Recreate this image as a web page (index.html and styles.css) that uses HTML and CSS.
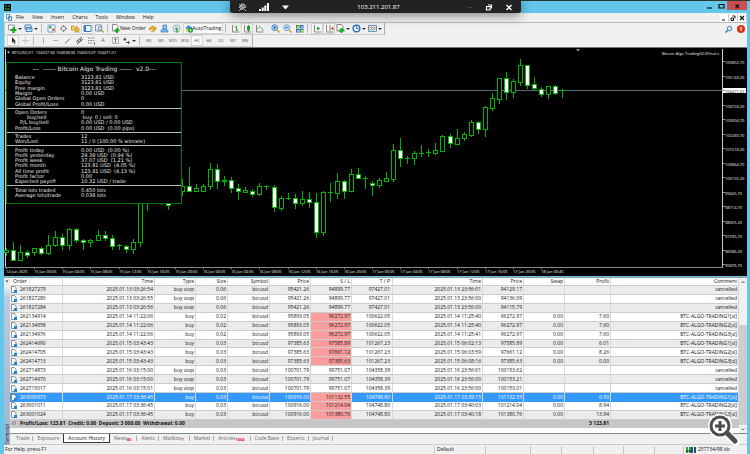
FILE: index.html
```html
<!DOCTYPE html>
<html lang="en">
<head>
  <meta charset="UTF-8">
  <meta name="viewport" content="width=device-width, initial-scale=1.0">
  <title>BTCUSD,H1 - Terminal</title>
  <link rel="stylesheet" href="styles.css">
</head>
<body>
  <div class="remote-bar">
    <button class="remote-btn" aria-label="Pin"><svg width="9" height="9" viewBox="0 0 9 9"><path d="M3 1h3l2 3-3 1-1 2-3-3 2-1zM1 8l2-2M1 1l7 7" fill="#777" stroke="#ddd" stroke-width=".7"/></svg></button>
    <button class="remote-btn" aria-label="Signal"><svg width="10" height="9" viewBox="0 0 10 9"><path d="M0 6h2v2H0zM2.700 4.500h2V8h-2zM5.300 2.500h2V8h-2zM8 0h2v8H8z" fill="#fff"/></svg></button>
    <button class="remote-btn" aria-label="More"><svg width="9" height="9" viewBox="0 0 9 9"><path d="M1 2.500h7L4.500 6.500z" fill="#fff"/></svg></button>
    <span class="remote-host">103.211.201.87</span>
    <button class="remote-btn" aria-label="Minimize"><svg width="6" height="9" viewBox="0 0 6 9"><path d="M1 4.500h4" stroke="#444"/></svg></button>
    <button class="remote-btn" aria-label="Restore"><svg width="8" height="9" viewBox="0 0 8 9"><path d="M1.500 3.500h3.500v3.500H1.500zM3 2h3.500v3.500" fill="none" stroke="#fff" stroke-width="1.200"/></svg></button>
    <button class="remote-btn" aria-label="Close"><svg width="8" height="9" viewBox="0 0 8 9"><path d="M1.500 2l5 5M6.500 2l-5 5" stroke="#fff" stroke-width="1.300"/></svg></button>
  </div>

  <div class="app">
    <header class="title-bar">
      <svg class="app-icon" width="7" height="7" viewBox="0 0 7 7"><path d="M0 0h7v7H0z" fill="#0a0a0a"/><path d="M1 2h2M4 2h2M1 5h5" stroke="#39b54a"/></svg>
      <div class="window-controls">
        <button aria-label="Minimize"><svg width="8" height="8" viewBox="0 0 8 8"><path d="M2 6h5" stroke="#111" stroke-width="1.200"/></svg></button>
        <button aria-label="Maximize"><svg width="8" height="8" viewBox="0 0 8 8"><path d="M2 2.500h5v3.500H2z" fill="none" stroke="#111" stroke-width="1.200"/></svg></button>
        <button class="close" aria-label="Close"><svg width="8" height="8" viewBox="0 0 8 8"><path d="M2.500 2.500l3.500 3.500M6 2.500L2.500 6" stroke="#111" stroke-width="1.300"/></svg></button>
      </div>
    </header>

    <nav class="menu-bar">
      <svg width="6" height="7" viewBox="0 0 6 7"><path d="M.5.5h3v4h-3zM2.500 2.500h3v4h-3z" fill="#fff" stroke="#4b83c4"/></svg>
      <button>File</button>
      <button>View</button>
      <button>Insert</button>
      <button>Charts</button>
      <button>Tools</button>
      <button>Window</button>
      <button>Help</button>
      <div class="mdi-controls">
        <button aria-label="Minimize chart"><svg width="8" height="8" viewBox="0 0 8 8"><path d="M2 6h3" stroke="#111"/></svg></button>
        <button aria-label="Restore chart"><svg width="8" height="8" viewBox="0 0 8 8"><path d="M2 4h2.500v2.500H2zM3.500 2h2.500v2.500" fill="none" stroke="#111"/></svg></button>
        <button aria-label="Close chart"><svg width="8" height="8" viewBox="0 0 8 8"><path d="M2 2l4 4M6 2L2 6" stroke="#111" stroke-width="1.200"/></svg></button>
      </div>
    </nav>

    <div class="toolbar">
      <div class="tool-group">
        <button class="tool wide" aria-label="New chart"><svg width="9" height="9" viewBox="0 0 9 9"><path d="M.5 1h6v5h-6z" fill="#fff" stroke="#8a9aa8"/><path d="M5.500 3v6M2.500 6h6" stroke="#17a81f" stroke-width="2.200"/></svg><i class="caret"></i></button>
        <button class="tool wide" aria-label="Profiles"><svg width="9" height="9" viewBox="0 0 9 9"><path d="M1 1h6v4H1zM2 3.500h6v4H2z" fill="#dceafa" stroke="#4b83c4"/></svg><i class="caret"></i></button>
        <i class="sep"></i>
        <button class="tool" aria-label="Market watch"><svg width="9" height="9" viewBox="0 0 9 9"><path d="M1 1h7v7H1z" fill="#fff" stroke="#6ea6d8"/><path d="M2 2h2.500v2.500H2z" fill="#3fae49"/><path d="M5 4.500h2.500V7H5z" fill="#e2643c"/></svg></button>
        <button class="tool" aria-label="Data window"><svg width="9" height="9" viewBox="0 0 9 9"><circle cx="4.500" cy="4.500" r="2.300" fill="none" stroke="#888"/><path d="M4.500 1v2M4.500 6v2M1 4.500h2M6 4.500h2" stroke="#888"/></svg></button>
        <button class="tool" aria-label="Navigator"><svg width="9" height="9" viewBox="0 0 9 9"><path d="M.5 2h2l1 1h3v3h-6z" fill="#f8d768" stroke="#b58a1c" stroke-width=".8"/><path d="M6 3.500l1 1.500h1.500l-1 1.500.5 2-2-1-2 1 .3-2L3.500 5H5z" fill="#f5bd28" stroke="#a87510" stroke-width=".5"/></svg></button>
        <button class="tool active" aria-label="Terminal"><svg width="9" height="9" viewBox="0 0 9 9"><path d="M1 1.500h7v6H1z" fill="#fff" stroke="#3b78c0"/><path d="M1 1.500h2v6H1z" fill="#3b78c0"/></svg></button>
        <button class="tool" aria-label="Strategy tester"><svg width="9" height="9" viewBox="0 0 9 9"><path d="M.5 1h6v6h-6z" fill="#eef4fa" stroke="#7c93a8"/><circle cx="5" cy="4.500" r="2" fill="#cfe4f7" stroke="#4c7da8" stroke-width=".8"/><path d="M6.500 6L8.500 8.500" stroke="#c79a2a" stroke-width="1.300"/></svg></button>
        <i class="sep"></i>
        <button class="tool text"><svg width="8" height="9" viewBox="0 0 8 9"><path d="M.5.500h4l1.500 2V7H.5z" fill="#fff" stroke="#888"/><path d="M5 4v5M2.500 6.500h5" stroke="#17a81f" stroke-width="1.800"/></svg>New Order</button>
        <button class="tool" aria-label="MetaEditor"><svg width="9" height="9" viewBox="0 0 9 9"><path d="M1 5l3.500-3 4 2.500L5 8z" fill="#e8b530" stroke="#a87510" stroke-width=".8"/><path d="M2 5.500l3 2" stroke="#fff" stroke-width=".7"/></svg></button>
        <button class="tool" aria-label="Market"><svg width="9" height="9" viewBox="0 0 9 9"><path d="M1 8c0-3 2-3 3.500-3S8 5 8 8z" fill="#7fb6ea" stroke="#3f7fbe" stroke-width=".7"/><path d="M3 1h3.500v4H3z" fill="#9cc8f0" stroke="#3f7fbe" stroke-width=".8"/></svg></button>
        <button class="tool" aria-label="Signals"><svg width="9" height="9" viewBox="0 0 9 9"><circle cx="4.500" cy="4.500" r="3.500" fill="none" stroke="#8db8a5"/><circle cx="4.500" cy="4.500" r="1.500" fill="#5fa7cf"/><path d="M5 5v3.500" stroke="#2fa838" stroke-width="1.500"/></svg></button>
        <button class="tool text active"><svg width="8" height="9" viewBox="0 0 8 9"><path d="M0 4l3.500-3L8 4l-4 2z" fill="#4a94d4"/><path d="M1 5h5v2.500H1z" fill="#e8c040"/><circle cx="5.500" cy="6.300" r="2.500" fill="#1ea52b"/><path d="M4.800 5l2 1.300-2 1.300z" fill="#fff"/></svg>AutoTrading</button>
        <i class="sep"></i>
        <button class="tool" aria-label="Bar chart"><svg width="9" height="9" viewBox="0 0 9 9"><path d="M1.500 1v7h7" fill="none" stroke="#888"/><path d="M5.500 2v5M4 3h1.500M5.500 6H7" stroke="#2fa838"/></svg></button>
        <button class="tool active" aria-label="Candlesticks"><svg width="9" height="9" viewBox="0 0 9 9"><path d="M1.500 1v7h7" fill="none" stroke="#888"/><path d="M4 2h3v4.500H4z" fill="#1ea52b"/><path d="M5.500 1v7" stroke="#1ea52b"/></svg></button>
        <button class="tool" aria-label="Line chart"><svg width="9" height="9" viewBox="0 0 9 9"><path d="M1.500 1v7h7" fill="none" stroke="#888"/><path d="M2 5.500l2.500-3 2 1.500 2 3" fill="none" stroke="#5fb868"/></svg></button>
        <button class="tool spaced" aria-label="Zoom in"><svg width="9" height="9" viewBox="0 0 9 9"><circle cx="3.700" cy="3.700" r="2.900" fill="#cfe6fa" stroke="#3b82c8"/><path d="M2 3.700h3.400M3.700 2v3.400" stroke="#2a68ae"/><path d="M6 6l2.500 2.500" stroke="#d2a52c" stroke-width="1.600"/></svg></button>
        <button class="tool" aria-label="Zoom out"><svg width="9" height="9" viewBox="0 0 9 9"><circle cx="3.700" cy="3.700" r="2.900" fill="#cfe6fa" stroke="#6fa0cf"/><path d="M2 3.700h3.400" stroke="#2a68ae"/><path d="M6 6l2.500 2.500" stroke="#d2a52c" stroke-width="1.600"/></svg></button>
        <button class="tool" aria-label="Tile windows"><svg width="9" height="9" viewBox="0 0 9 9"><path d="M1 1h3.500v3.500H1zM5 5h3.500v3.500H5z" fill="#35a03a"/><path d="M5 1h3.500v3.500H5zM1 5h3.500v3.500H1z" fill="#3566c8"/><path d="M2 3h2M6 3h2M2 7h2M6 7h2" stroke="#fff"/></svg></button>
        <i class="sep"></i>
        <button class="tool active" aria-label="Auto scroll"><svg width="9" height="9" viewBox="0 0 9 9"><path d="M1.500 1v7h7" fill="none" stroke="#888"/><path d="M4 2.500l3.500 2L4 6.500z" fill="#2fa838"/></svg></button>
        <button class="tool active" aria-label="Chart shift"><svg width="9" height="9" viewBox="0 0 9 9"><path d="M1.500 1v7h7M5 1v6" fill="none" stroke="#888"/><path d="M8.500 2.500v4L5.500 4.500z" fill="#c8553c"/></svg></button>
        <button class="tool wide" aria-label="Indicators"><svg width="9" height="9" viewBox="0 0 9 9"><path d="M1 .5h4.500l1.500 2V7H1z" fill="#fff" stroke="#888"/><path d="M5.500 4v5M3 6.500h5.500" stroke="#17a81f" stroke-width="1.900"/></svg><i class="caret"></i></button>
        <button class="tool wide" aria-label="Periods"><svg width="9" height="9" viewBox="0 0 9 9"><circle cx="4.500" cy="4.500" r="3.300" fill="#fff" stroke="#2c72c4" stroke-width="1.500"/><path d="M4.500 2.500v2h2" fill="none" stroke="#333" stroke-width=".8"/></svg><i class="caret"></i></button>
        <button class="tool wide" aria-label="Templates"><svg width="9" height="9" viewBox="0 0 9 9"><path d="M.5 1.500h8v6h-8z" fill="#e3f0fb" stroke="#6f93b5"/><path d="M1.500 4l2-1 2 1 2-1" fill="none" stroke="#c8553c" stroke-width=".8"/><path d="M1.500 6l2-1 2 1 2-1" fill="none" stroke="#2fa838" stroke-width=".8"/></svg><i class="caret"></i></button>
      </div>
      <div class="toolbar-right">
        <button class="tool" aria-label="Search"><svg width="8" height="9" viewBox="0 0 8 9"><circle cx="4.500" cy="3.500" r="2.200" fill="#eaf2fc" stroke="#3a6fc9"/><path d="M3 5L.5 7.500" stroke="#3a6fc9" stroke-width="1.400"/></svg></button>
        <button class="alert-badge" aria-label="1 notification">1</button>
      </div>
    </div>

    <div class="toolbar">
      <div class="tool-group">
        <button class="tool active" aria-label="Cursor"><svg width="9" height="9" viewBox="0 0 9 9"><path d="M3 1v6l1.500-1.200L5.500 8l1-.5-1-2H7z" fill="#333"/></svg></button>
        <button class="tool" aria-label="Crosshair"><svg width="9" height="9" viewBox="0 0 9 9"><path d="M4.500 1v7M1 4.500h7" stroke="#bbb" stroke-width=".8"/></svg></button>
        <i class="sep"></i>
        <button class="tool" aria-label="Vertical line"><svg width="9" height="9" viewBox="0 0 9 9"><path d="M4.500 1.500v6" stroke="#aaa"/></svg></button>
        <button class="tool" aria-label="Horizontal line"><svg width="9" height="9" viewBox="0 0 9 9"><path d="M2 4.500h5" stroke="#aaa"/></svg></button>
        <button class="tool" aria-label="Trendline"><svg width="9" height="9" viewBox="0 0 9 9"><path d="M2 7.500l5-5" stroke="#666"/></svg></button>
        <button class="tool" aria-label="Channel"><svg width="9" height="9" viewBox="0 0 9 9"><path d="M1 6l6-5M2 8l6-5M3 4l1 3M5 2.500l1 3" stroke="#555" stroke-width=".9"/></svg></button>
        <button class="tool" aria-label="Fibonacci"><svg width="9" height="9" viewBox="0 0 9 9"><path d="M1 2h7M1 4.500h7M1 7h5" stroke="#777" stroke-dasharray="1 .7"/><path d="M7.500 6v3" stroke="#777"/></svg></button>
        <button class="tool" aria-label="Text">A</button>
        <button class="tool" aria-label="Text label"><svg width="9" height="9" viewBox="0 0 9 9"><path d="M1.500 1.500h6v6h-6z" fill="none" stroke="#999" stroke-width=".7"/><path d="M3 3h3M4.500 3v4" stroke="#666" stroke-width=".8"/></svg></button>
        <button class="tool wide" aria-label="Arrows"><svg width="9" height="9" viewBox="0 0 9 9"><path d="M1 3.500L3 1.500l1.500 2L3 5zM4 6h2V4.500L8 6.500 6 8.500V7H4z" fill="#555"/></svg><i class="caret"></i></button>
        <i class="sep"></i>
        <button class="tool period">M1</button>
        <button class="tool period">M5</button>
        <button class="tool period">M15</button>
        <button class="tool period">M30</button>
        <button class="tool period active">H1</button>
        <button class="tool period">H4</button>
        <button class="tool period">D1</button>
        <button class="tool period">W1</button>
        <button class="tool period">MN</button>
      </div>
    </div>

    <main class="chart">
      <svg id="chart" class="chart-canvas" viewBox="4 48 743 228" role="img" aria-label="BTCUSD hourly chart"></svg>
      <section class="stats">
        <h2>---&nbsp; ------ Bitcoin Algo Trading ------&nbsp; v2.0---</h2>
        <dl class="rows-6">
          <dt>Balance</dt><dd>3123.81 USD</dd>
          <dt>Equity</dt><dd>3123.81 USD</dd>
          <dt>Free margin</dt><dd>3123.81 USD</dd>
          <dt>Margin</dt><dd>0.00 USD</dd>
          <dt>Global Open Orders</dt><dd>0</dd>
          <dt>Global Profit/Loss</dt><dd>0.00 USD</dd>
        </dl>
        <dl class="rows-4">
          <dt>Open Orders</dt><dd>0</dd>
          <dt class="indent-2">buy/sell</dt><dd>&nbsp;buy: 0 / sell: 0</dd>
          <dt class="indent-1">P/L buy/sell</dt><dd>0.00 USD / 0.00 USD</dd>
          <dt>Profit/Loss</dt><dd>0.00 USD&nbsp; (0.00 pips)</dd>
        </dl>
        <dl class="rows-2">
          <dt>Trades</dt><dd>12</dd>
          <dt>Won/Lost</dt><dd>11 / 0 (100.00 % winrate)</dd>
        </dl>
        <dl class="rows-7">
          <dt>Profit today</dt><dd>0.00 USD&nbsp; (0.00 %)</dd>
          <dt>Profit yesterday</dt><dd>29.38 USD&nbsp; (0.94 %)</dd>
          <dt>Profit week</dt><dd>37.07 USD&nbsp; (1.21 %)</dd>
          <dt>Profit month</dt><dd>123.81 USD&nbsp; (4.05 %)</dd>
          <dt>All time profit</dt><dd>123.81 USD&nbsp; (4.13 %)</dd>
          <dt>Profit factor</dt><dd>0.00</dd>
          <dt>Expected payoff</dt><dd>10.32 USD / trade</dd>
        </dl>
        <dl class="rows-2">
          <dt>Total lots traded</dt><dd>0.450 lots</dd>
          <dt>Average lots/trade</dt><dd>0.038 lots</dd>
        </dl>
      </section>
    </main>

    <section class="terminal">
      <div class="terminal-side">
        <button class="side-close" aria-label="Close terminal">×</button>
        <span class="side-label">Terminal</span>
      </div>
      <div class="terminal-main">
        <div class="history">
          <table>
            <colgroup>
              <col class="w-order"><col class="w-time"><col class="w-type"><col class="w-size"><col class="w-symbol"><col class="w-price"><col class="w-price"><col class="w-price"><col class="w-close"><col class="w-price"><col class="w-price"><col class="w-profit"><col>
            </colgroup>
            <thead>
              <tr><th>Order&nbsp; <span class="sort">⁄</span></th><th>Time</th><th>Type</th><th>Size</th><th>Symbol</th><th>Price</th><th>S / L</th><th>T / P</th><th>Time</th><th>Price</th><th>Swap</th><th>Profit</th><th>Comment</th></tr>
            </thead>
            <tbody id="orders"></tbody>
            <tfoot>
              <tr><td colspan="11"><svg width="6" height="6" viewBox="0 0 6 6"><circle cx="3" cy="3" r="1.500" fill="none" stroke="#777" stroke-width=".7"/></svg>Profit/Loss: 123.81&nbsp; Credit: 0.00&nbsp; Deposit: 3 000.00&nbsp; Withdrawal: 0.00</td><td class="total">3 123.81</td><td></td></tr>
            </tfoot>
          </table>
          <div class="scrollbar">
            <svg width="8" height="8" viewBox="0 0 8 8"><path d="M2.500 5L4 3.500 5.500 5" fill="none" stroke="#555"/></svg>
            <div class="scroll-track"><div class="scroll-thumb"></div></div>
            <svg width="8" height="8" viewBox="0 0 8 8"><path d="M2.500 3.500L4 5l1.500-1.500" fill="none" stroke="#777"/></svg>
          </div>
        </div>
        <div class="tabs">
          <button>Trade</button>
          <button>Exposure</button>
          <button class="selected">Account History</button>
          <button>News<sub>85</sub></button>
          <button>Alerts</button>
          <button>Mailbox<sub>7</sub></button>
          <button>Market</button>
          <button>Articles<sub>1004</sub></button>
          <button>Code Base</button>
          <button>Experts</button>
          <button>Journal</button>
        </div>
      </div>
    </section>

    <footer class="status-bar">
      <span>For Help, press F1</span>
      <span>Default</span>
      <span></span>
      <span></span>
      <span></span>
      <span></span>
      <span></span>
      <span></span>
      <span class="traffic"><svg width="10" height="6" viewBox="0 0 10 6"><path d="M0 0h2v6H0zM3 0h2v6H3z" fill="#2fa838"/><path d="M5 0h2v6H5zM8 0h2v6H8z" fill="#1d4f7c"/><path d="M0 4h5" stroke="#123" stroke-width="1"/></svg>257734/98 kb</span>
    </footer>
  </div>

  <button class="magnifier" aria-label="Enlarge">
    <svg width="34" height="34" viewBox="0 0 34 34">
      <path d="M21 21l9 9" stroke="#fff" stroke-width="8" stroke-linecap="round"/>
      <circle cx="14" cy="14" r="9" fill="#fff" stroke="#fff" stroke-width="6"/>
      <circle cx="14" cy="14" r="9" fill="#fff" stroke="#4d4d4d" stroke-width="3"/>
      <path d="M14 9v10M9 14h10" stroke="#4d4d4d" stroke-width="3"/>
      <path d="M21 21l8 8" stroke="#4d4d4d" stroke-width="5" stroke-linecap="round"/>
    </svg>
  </button>

  <script src="script.js"></script>
</body>
</html>
```

FILE: styles.css
```css
* {
  margin: 0;
  padding: 0;
  box-sizing: border-box;
}
body {
  background: #63c7eb;
  color: #111;
  font-family: 'Open Sans', 'Noto Sans', sans-serif;
  font-size: 5px;
  line-height: 7px;
  min-height: 100vh;
}
button {
  border: none;
  background: none;
  color: inherit;
  font: inherit;
  cursor: pointer;
}
svg {
  display: block;
}
.app {
  display: flex;
  flex-direction: column;
  min-height: 100vh;
  padding: 0 3px 0 4px;
  border-top: 1px solid #333;
}

/* remote session bar floating over the window */
.remote-bar {
  position: absolute;
  top: 0;
  left: 50%;
  z-index: 5;
  width: 291px;
  height: 13px;
  margin-left: -145px;
  padding: 1px 8px 0;
  display: flex;
  align-items: center;
  gap: 12px;
  background: #222;
  color: #fff;
  border-radius: 0 0 3px 3px;
  box-shadow: 0 2px 12px rgba(0, 0, 0, 0.5);
  font-size: 6px;
}
.remote-host {
  flex: 1;
  text-align: center;
}

.title-bar {
  display: flex;
  justify-content: space-between;
  align-items: flex-start;
  height: 12px;
}
.app-icon {
  margin-top: 3px;
}
.window-controls {
  display: flex;
}
.window-controls button {
  width: 12px;
  height: 9px;
  display: flex;
  align-items: center;
  justify-content: center;
}
.window-controls .close {
  width: 20px;
  background: #c75050;
}

.menu-bar {
  display: flex;
  align-items: center;
  gap: 8px;
  height: 10px;
  padding-left: 2px;
  background: #f0f0f0;
  border-bottom: 1px solid #bbb;
}
.menu-bar > svg {
  margin-right: -4px;
}
.mdi-controls {
  display: flex;
  margin-left: auto;
}
.mdi-controls button {
  background: #fff;
  border-right: 1px solid #ccc;
}

.toolbar {
  display: flex;
  justify-content: space-between;
  height: 12px;
  background: #f0f0f0;
}
.tool-group {
  display: flex;
  align-items: center;
  padding: 0 1px 0 2px;
  border-left: 1px solid #ccc;
  border-right: 1px solid #aaa;
  border-bottom: 1px solid #ccc;
}
.tool {
  display: flex;
  align-items: center;
  justify-content: center;
  width: 12px;
  height: 11px;
  color: #555;
}
.tool.wide {
  width: 16px;
}
.tool.text {
  width: auto;
  padding: 0 1px;
  color: #111;
}
.tool.spaced {
  margin-left: 4px;
}
.tool.period {
  font-family: 'Liberation Sans', Arial, sans-serif;
  font-size: 4px;
}
.tool.active {
  background: #fafafa;
  outline: 1px solid #d4d4d4;
  outline-offset: -1px;
}
.tool.text.active {
  padding: 0 2px;
}
.caret {
  margin-left: 1px;
  border: 2px solid transparent;
  border-top-color: #333;
  border-bottom: none;
}
.sep {
  width: 1px;
  height: 9px;
  margin: 0 3px 0 2px;
  background: #bbb;
}
.toolbar-right {
  display: flex;
  align-items: center;
  gap: 2px;
  padding-right: 2px;
}
.alert-badge {
  width: 8px;
  height: 8px;
  border-radius: 50%;
  background: #dc3418;
  color: #fff;
  font-weight: 700;
  line-height: 8px;
}

/* chart */
.chart {
  position: relative;
  background: #000;
  border-top: 1px solid #777;
}
.chart-canvas {
  width: 100%;
  height: auto;
  font-size: 4px;
}
.chart-canvas text {
  fill: #f2f2f2;
}
.chart-canvas .current {
  fill: #000;
}
.candle {
  stroke: #00b400;
  fill: #000;
  shape-rendering: crispEdges;
}
.candle.down {
  fill: #fff;
}
.axis {
  stroke: #888;
  shape-rendering: crispEdges;
}
.axis.strong {
  stroke: #ccc;
}
.price-line {
  stroke: #5c6975;
  shape-rendering: crispEdges;
}

.stats {
  position: absolute;
  top: 14px;
  left: 2px;
  width: 176px;
  height: 142px;
  display: flex;
  flex-direction: column;
  background: #000;
  border: 1px solid #007a00;
  color: #e8e8e8;
  font-family: 'DejaVu Sans', Verdana, sans-serif;
  line-height: 5px;
}
.stats h2 {
  padding: 3px 0 2px;
  font-size: 6px;
  font-weight: 400;
  line-height: 6px;
  text-align: center;
}
.stats dl {
  display: grid;
  grid-template-columns: 66px 1fr;
  grid-auto-rows: 1fr;
  align-items: center;
  padding: 1px 0 1px 8px;
  border-bottom: 1px solid #bbb;
}
.stats dl:last-child {
  padding-bottom: 5px;
  border-bottom: none;
}
.rows-2 {
  flex: 2 0 auto;
}
.rows-4 {
  flex: 4 0 auto;
}
.rows-6 {
  flex: 6 0 auto;
}
.rows-7 {
  flex: 7 0 auto;
}
.indent-1 {
  padding-left: 5px;
}
.indent-2 {
  padding-left: 12px;
}

/* terminal */
.terminal {
  display: flex;
  margin-top: 1px;
  background: #f0f0f0;
  border-top: 1px solid #999;
}
.terminal-side {
  width: 6px;
  display: flex;
  flex-direction: column;
  justify-content: space-between;
  align-items: center;
  background: linear-gradient(#f0f0f0 5%, #b9cbe0 12%, #9db5d2);
}
.side-close {
  font-weight: 700;
}
.side-label {
  writing-mode: vertical-rl;
  transform: rotate(180deg);
  line-height: 6px;
}
.terminal-main {
  flex: 1;
  min-width: 0;
}
.history {
  display: flex;
  background: #fff;
  border-bottom: 1px solid #888;
  height: 156px;
  align-items: flex-start;
}
table {
  flex: 1;
  width: 100%;
  height: 150px;
  table-layout: fixed;
  border-collapse: separate;
  border-spacing: 0;
}
th,
td {
  padding: 0 1px;
  line-height: 7px;
  text-align: right;
  font-weight: 400;
  white-space: nowrap;
  border-right: 1px solid #d8d8d8;
  border-bottom: 1px solid #ccc;
}
th:first-child,
td:first-child {
  text-align: left;
}
th:nth-child(8),
td:nth-child(8) {
  padding-right: 2px;
}
th:first-child {
  padding-left: 3px;
}
th .sort {
  color: #888;
}
tbody td:first-child svg,
tfoot svg {
  display: inline-block;
  margin-right: 3px;
  vertical-align: top;
}
tbody tr:nth-child(odd) td {
  background: #ebebeb;
}
tbody tr td.stopped,
tbody tr:nth-child(odd) td.stopped {
  background: #fc9d9d;
  color: #111;
}
tbody tr.selected:nth-child(odd) td:not(.stopped) {
  background: #3399ff;
  color: #fff;
  border-bottom-color: #3399ff;
}
tfoot td {
  background: #c6c6c6;
  font-weight: 700;
  border-color: #c6c6c6;
}
.w-order { width: 53px; }
.w-time { width: 92px; }
.w-type { width: 41px; }
.w-size { width: 32px; }
.w-symbol { width: 42px; }
.w-price { width: 41px; }
.w-close { width: 90px; }
.w-profit { width: 46px; }

.scrollbar {
  align-self: stretch;
  display: flex;
  flex-direction: column;
  background: #f0f0f0;
}
.scroll-track {
  flex: 1;
  display: flex;
  align-items: flex-end;
}
.scroll-thumb {
  width: 8px;
  height: 72%;
  background: #cdcdcd;
}

.tabs {
  display: flex;
  height: 11px;
  align-items: flex-start;
  border-bottom: 1px solid #ccc;
  color: #666;
}
.tabs button {
  display: flex;
  padding: 0 4px;
  line-height: 8px;
}
.tabs button:first-child {
  margin-left: 2px;
}
.tabs button::after {
  content: '';
  width: 1px;
  height: 5px;
  margin: 2px -4px 0 3px;
  background: #aaa;
}
.tabs .selected {
  height: 9px;
  background: #fff;
  color: #111;
  border: 1px solid #333;
  border-top: none;
}
.tabs .selected::after,
.tabs button:nth-child(2)::after {
  background: none;
}
.tabs .selected::after {
  display: none;
}
.tabs sub {
  margin-right: 2px;
  color: #e02030;
  font-size: 4px;
  font-weight: 700;
  line-height: 11px;
  vertical-align: baseline;
}

.status-bar {
  display: grid;
  grid-template-columns: 1fr 51px 45px 31px 32px 30px 31px 29px 64px;
  flex: 1;
  align-items: center;
  background: #f0f0f0;
}
.status-bar span {
  height: 8px;
  padding-left: 2px;
  border-left: 1px solid #c4c4c4;
}
.status-bar span:first-child {
  padding-left: 0;
  border-left-color: #f0f0f0;
}
.status-bar .traffic {
  display: flex;
  align-items: center;
  gap: 2px;
}

.magnifier {
  position: absolute;
  right: 10px;
  bottom: 8px;
}
```

FILE: script.js
```js
// [high, body top, body bottom, low, falling]
const candles = [
  [248, 250, 252, 255, 0], [242, 250, 260, 260, 1], [245, 252, 260, 260, 0], [250, 252, 255, 257, 1],
  [248, 248, 252, 255, 0], [247, 248, 253, 254, 1], [235, 245, 253, 254, 0], [231, 237, 245, 246, 0],
  [234, 237, 245, 249, 1], [228, 229, 245, 249, 0], [228, 229, 240, 242, 1], [239, 240, 242, 249, 1],
  [239, 240, 242, 246, 0], [230, 235, 240, 240, 0], [231, 235, 238, 240, 1], [235, 238, 246, 249, 1],
  [244, 245, 245, 249, 0], [245, 246, 249, 252, 1], [239, 242, 249, 253, 0], [200, 200, 242, 246, 0],
  [198, 198, 202, 210, 0], [198, 199, 202, 203, 0], [198, 199, 203, 204, 0], [198, 200, 205, 209, 1],
  [190, 191, 202, 203, 0], [179, 186, 191, 195, 0], [167, 186, 191, 191, 1], [184, 188, 191, 191, 0],
  [184, 186, 191, 191, 0], [163, 169, 186, 189, 0], [164, 169, 181, 188, 1], [176, 180, 181, 185, 0],
  [177, 180, 188, 192, 1], [184, 188, 191, 199, 1], [187, 190, 192, 192, 0], [189, 191, 194, 196, 1],
  [183, 186, 194, 195, 0], [185, 186, 186, 189, 0], [185, 187, 207, 211, 1], [196, 198, 208, 210, 0],
  [193, 198, 198, 199, 0], [194, 198, 203, 208, 1], [191, 199, 203, 205, 0], [192, 199, 202, 207, 1],
  [193, 202, 232, 237, 1], [191, 192, 232, 235, 0], [183, 192, 192, 201, 0], [173, 181, 193, 198, 0],
  [180, 181, 191, 198, 1], [169, 174, 191, 191, 0], [168, 174, 178, 178, 1], [176, 178, 178, 188, 0],
  [181, 183, 185, 195, 1], [178, 180, 185, 187, 0], [172, 178, 181, 181, 0], [144, 150, 179, 181, 0],
  [138, 150, 158, 166, 1], [156, 158, 158, 163, 0], [151, 153, 158, 164, 0], [145, 153, 153, 156, 0],
  [149, 152, 152, 156, 0], [143, 150, 153, 154, 0], [135, 136, 151, 151, 0], [134, 136, 143, 147, 1],
  [129, 138, 144, 144, 0], [132, 134, 138, 140, 0], [120, 122, 135, 136, 0], [121, 122, 129, 133, 1],
  [106, 107, 129, 136, 0], [93, 98, 108, 110, 0], [78, 78, 99, 103, 0], [72, 78, 92, 99, 1],
  [79, 81, 92, 97, 0], [59, 65, 82, 85, 0], [65, 65, 85, 88, 1], [77, 84, 88, 90, 1],
  [87, 89, 94, 96, 1], [86, 86, 94, 98, 0], [85, 86, 93, 94, 1], [89, 90, 90, 97, 0]
];

const prices = ['105852.70', '105143.20', '104471.01', '103724.20', '103004.70', '102283.70', '101574.20',
  '100864.70', '100155.20', '99445.70', '98714.70', '98005.20', '97295.70', '96586.20', '95876.70'];

const hours = ['00:05', '04:05', '08:05', '12:05', '16:05', '20:05'];
const times = ['14 Jan 2025'];
[15, 16, 17].forEach(day => hours.forEach(hour => times.push(day + ' Jan ' + hour)));
times.push('18 Jan 00:45');

function drawChart() {
  let out = '<path class="axis strong" d="M5.500 49V267M722.500 49V267"/><path class="axis" d="M5 267.500H723"/>';
  out += '<path class="price-line" d="M5 90.500H722"/>';
  candles.forEach(([high, top, bottom, low, falling], i) => {
    const x = Math.round(6 + i * 7.04) + 0.5;
    const cls = falling ? 'candle down' : 'candle';
    out += `<path class="${cls}" d="M${x} ${high}V${low + 1}"/>`;
    out += bottom > top
      ? `<path class="${cls}" d="M${x - 2} ${top + 0.5}h4V${bottom + 0.5}h-4z"/>`
      : `<path class="${cls}" d="M${x - 2.5} ${top + 0.5}h5"/>`;
  });
  prices.forEach((price, i) => {
    const y = i === 2 ? 91 : Math.round(62 + i * 14.5);
    if (i === 2) {
      out += '<path fill="#fff" d="M723 88h23v5h-23z"/>';
    }
    out += `<path class="axis" d="M723 ${y - 0.5}h2"/>`;
    out += `<text ${i === 2 ? 'class="current" ' : ''}x="725" y="${y + 1.5}">${price}</text>`;
  });
  times.forEach((time, i) => {
    const x = Math.round(6 + i * 28.16);
    out += `<path class="axis" d="M${x + 0.5} 267v2"/><text x="${x}" y="272.500">${time}</text>`;
  });
  out += '<path fill="#ddd" d="M7 51.500h3l-1.500 2z"/><path fill="#8a97a3" d="M576 49h4l-2 2.500z"/>';
  out += '<text x="12" y="54">BTCUSD,H1&#160; 104337.66 104698.06 104053.07 104471.01</text>';
  out += '<text x="720" y="54.500" text-anchor="end">Bitcoin Algo TradingV2.0Final☺</text>';
  document.getElementById('chart').innerHTML = out;
}

// order, time, type, size, price, s/l, t/p, close time, close price, swap, profit, comment
const orders = [
  ['261827279', '2025.01.13 03:26:54', 'buy stop', '0.06', '95421.26', '94899.77', '97427.01', '2025.01.13 23:56:01', '94129.17', '', '', 'cancelled'],
  ['261827280', '2025.01.13 03:26:55', 'buy stop', '0.06', '95421.26', '94899.77', '97427.01', '2025.01.13 23:56:00', '94136.09', '', '', 'cancelled'],
  ['261827284', '2025.01.13 03:26:56', 'buy stop', '0.06', '95421.26', '94899.77', '97427.01', '2025.01.13 23:56:00', '94115.79', '', '', 'cancelled'],
  ['262134914', '2025.01.14 11:22:06', 'buy', '0.02', '95893.05', '96272.97', '100622.05', '2025.01.14 11:25:40', '96272.97', '0.00', '7.60', 'BTC-ALGO-TRADING1[sl]'],
  ['262134958', '2025.01.14 11:22:06', 'buy', '0.02', '95893.05', '96272.97', '100622.05', '2025.01.14 11:25:40', '96272.97', '0.00', '7.60', 'BTC-ALGO-TRADING2[sl]'],
  ['262134976', '2025.01.14 11:22:06', 'buy', '0.02', '95893.05', '96272.97', '100622.05', '2025.01.14 11:25:41', '96272.97', '0.00', '7.60', 'BTC-ALGO-TRADING3[sl]'],
  ['262414690', '2025.01.15 03:43:43', 'buy', '0.03', '97385.63', '97585.89', '101267.23', '2025.01.15 06:02:13', '97585.89', '0.00', '6.01', 'BTC-ALGO-TRADING1[sl]'],
  ['262414705', '2025.01.15 03:43:43', 'buy', '0.03', '97385.63', '97661.12', '101267.23', '2025.01.15 06:03:59', '97661.12', '0.00', '8.26', 'BTC-ALGO-TRADING2[sl]'],
  ['262414713', '2025.01.15 03:43:43', 'buy', '0.03', '97385.63', '97385.63', '101267.23', '2025.01.15 06:08:16', '97385.63', '0.00', '0.00', 'BTC-ALGO-TRADING3[sl]'],
  ['262714873', '2025.01.16 03:15:00', 'buy stop', '0.03', '100701.79', '99751.07', '104358.39', '2025.01.16 23:56:01', '100153.62', '', '', 'cancelled'],
  ['262714970', '2025.01.16 03:15:00', 'buy stop', '0.03', '100701.79', '99751.07', '104358.39', '2025.01.16 23:56:00', '100153.21', '', '', 'cancelled'],
  ['262715017', '2025.01.16 03:15:01', 'buy stop', '0.03', '100701.79', '99751.07', '104358.39', '2025.01.16 23:56:00', '100153.01', '', '', 'cancelled'],
  ['263000973', '2025.01.17 03:36:45', 'buy', '0.03', '100916.00', '101132.55', '104748.80', '2025.01.17 03:39:15', '101132.55', '0.00', '6.50', 'BTC-ALGO-TRADING1[sl]'],
  ['263001011', '2025.01.17 03:36:45', 'buy', '0.03', '100916.00', '101214.04', '104748.80', '2025.01.17 03:40:03', '101214.04', '0.00', '8.94', 'BTC-ALGO-TRADING2[sl]'],
  ['263001024', '2025.01.17 03:36:45', 'buy', '0.03', '100916.00', '101380.76', '104748.80', '2025.01.17 03:40:18', '101380.76', '0.00', '13.94', 'BTC-ALGO-TRADING3[sl]']
];

const orderIcon = '<svg width="6" height="7" viewBox="0 0 6 7"><path d="M.5.500h3l1.500 2V6.500H.5z" fill="#fff" stroke="#777" stroke-width=".8"/><path d="M3 4h3v3H3z" fill="#1c86d8"/></svg>';

function fillOrders() {
  document.getElementById('orders').innerHTML = orders.map(o => {
    const cells = [orderIcon + o[0], o[1], o[2], o[3], 'btcusd', ...o.slice(4)];
    const tds = cells.map((cell, i) => {
      const stopped = i === 6 && o[11].endsWith('[sl]');
      return `<td${stopped ? ' class="stopped"' : ''}>${cell}</td>`;
    }).join('');
    return `<tr${o[0] === '263000973' ? ' class="selected"' : ''}>${tds}</tr>`;
  }).join('');
}

drawChart();
fillOrders();
```
